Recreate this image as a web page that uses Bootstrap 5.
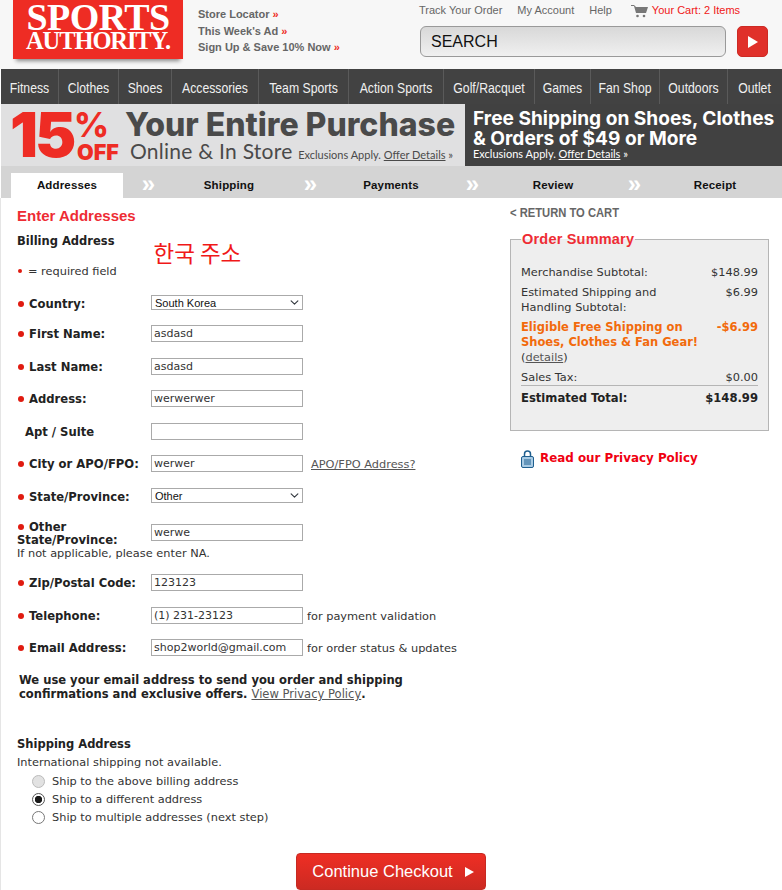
<!DOCTYPE html>
<html lang="en">
<head>
  <meta charset="UTF-8">
  <title>Sports Authority - Checkout</title>
  <link href="https://cdn.jsdelivr.net/npm/bootstrap@5.3.0/dist/css/bootstrap.min.css" rel="stylesheet">
  <style>
    body { font-family: "DejaVu Sans", Verdana, sans-serif; font-size: 11.35px; color: #333; background: #fff; overflow-x: hidden; }
    a { color: #555; }
    .page-top { height: 69px; background: #f7f7f7; }
    .logo-box { width: 170px; height: 59px; margin-left: 13px; background: #ee2c24; color: #fff; font-family: "Liberation Serif", serif; font-weight: 700; text-align: center; box-shadow: 0 5px 4px -3px #888; line-height: 1; flex: 0 0 auto; }
    .logo-one { font-size: 38px; letter-spacing: -.6px; line-height: 28px; padding-top: 3px; }
    .logo-two { font-size: 24.5px; letter-spacing: -1.1px; line-height: 20px; }
    .quick-links { margin-left: 15px; padding-top: 6px; font-family: "Liberation Sans", Arial, sans-serif; font-size: 11px; font-weight: 700; color: #666; line-height: 16.5px; }
    .quick-links span { color: #ee2c24; }
    .top-right { width: 362px; margin-left: auto; }
    .acct-links { font-family: "Liberation Sans", Arial, sans-serif; font-size: 11px; line-height: 13px; color: #666; padding: 4px 0 0 0; height: 26px; gap: 15px; margin-left: -1px; }
    .acct-links .cart-txt { color: #f01818; gap: 4px; margin-left: 4px; }
    .search-field { width: 306px; height: 31px; border: 1px solid #999; border-radius: 6px; background: linear-gradient(#d8d8d8, #f0f0f0); font-family: "Liberation Sans", Arial, sans-serif; font-size: 16px; color: #111; padding: 3px 10px; }
    .search-go { width: 31px; height: 31px; margin-left: 11px; border-radius: 5px; background: #e0302a; border: 1px solid #cc2a24; padding: 0; }
    .main-nav { height: 35px; background: #424242; margin-left: 1px; font-family: "Liberation Sans", sans-serif; font-size: 15px; color: #f0f0f0; }
    .main-nav a { text-decoration: none; color: inherit; line-height: 37px; border-right: 1px solid #5a5a5a; white-space: nowrap; flex: 0 0 auto; }
    .main-nav a span { display: block; transform: scaleX(.815); }
    .main-nav a:last-child { border-right: 0; }
    .main-nav a:nth-child(1) { width: 58px; }
    .main-nav a:nth-child(2) { width: 60px; }
    .main-nav a:nth-child(3) { width: 53px; }
    .main-nav a:nth-child(4) { width: 87px; }
    .main-nav a:nth-child(5) { width: 90px; }
    .main-nav a:nth-child(6) { width: 95px; }
    .main-nav a:nth-child(7) { width: 91px; }
    .main-nav a:nth-child(8) { width: 56px; }
    .main-nav a:nth-child(9) { width: 69px; }
    .main-nav a:nth-child(10) { width: 68px; }
    .main-nav a:nth-child(11) { width: 53px; }
    .promo { height: 62px; margin-left: 1px; font-family: "Inter", sans-serif; }
    .promo a { color: inherit; }
    .promo-left { width: 464px; background: #e0e0e1; color: #4a4a4a; overflow: hidden; flex: 0 0 auto; }
    .promo-num { font-size: 62px; line-height: 62px; font-weight: 900; color: #ee2c24; letter-spacing: -3px; margin-left: 9px; width: 67px; white-space: nowrap; }
    .promo-pct { color: #ee2c24; font-weight: 900; line-height: 1; width: 48px; flex: 0 0 auto; }
    .promo-pct b { display: block; font-size: 34px; line-height: 34px; margin: 4px 0 1px -3px; font-weight: 800; }
    .promo-pct i { display: block; font-style: normal; font-weight: 900; font-size: 21.5px; line-height: 18px; }
    .promo-head { font-size: 32px; font-weight: 800; line-height: 32px; white-space: nowrap; margin-top: 5px; }
    .promo-sub { font-family: "Lato", sans-serif; font-size: 21px; line-height: 20px; white-space: nowrap; letter-spacing: .25px; margin-left: 5px; }
    .promo-sub small { font-size: 11px; letter-spacing: 0; }
    .promo-right { flex: 1; background: #414141; color: #fff; padding: 4px 0 0 8px; white-space: nowrap; min-width: 0; }
    .promo-right strong { display: block; font-size: 19.1px; line-height: 20px; font-weight: 700; }
    .promo-right small { display: block; font-family: "Lato", sans-serif; font-size: 11px; line-height: 13px; margin-top: -1px; }
    .steps { height: 32px; background: #d4d4d4; margin-left: 1px; padding-top: 7px; padding-left: 10px; font-family: "Liberation Sans", Arial, sans-serif; font-weight: 700; font-size: 11.5px; color: #111; letter-spacing: .15px; }
    .step-item { width: 112px; height: 25px; text-align: center; line-height: 24px; }
    .step-item.on { background: #fff; }
    .step-sep { width: 50px; height: 25px; color: #fff; font-size: 24px; line-height: 22px; text-align: center; padding-left: 1px; }
    .content-wrap { border-left: 1px solid #e5e5e5; padding: 0 13px 0 16px; }
    .form-side { width: 493px; flex: 0 0 auto; }
    .sum-side { width: 259px; flex: 0 0 auto; }
    .red-title { font-family: "Liberation Sans", Arial, sans-serif; font-weight: 700; font-size: 15px; color: #ee2c34; line-height: 18px; margin: 9px 0 9px; }
    .sub-title { font-weight: 700; color: #222; font-size: 11.5px; line-height: 14px; margin: 0; white-space: nowrap; }
    .korean { font-family: "Noto Sans CJK KR", sans-serif; color: #f01818; font-size: 22.5px; line-height: 26px; margin: 5px 0 0 39px; }
    .req-dot { display: inline-block; width: 6px; height: 6px; background: #e01b10; margin: 0 5px 1px 1px; }
    .req-note { line-height: 14px; margin-top: -1px; margin-bottom: 17px; color: #333; }
    .req-note .req-dot { width: 4px; height: 4px; margin: 0 6px 2px 1px; }
    .field-row { height: 17px; margin-bottom: 15.5px; }
    .field-row.pick-top { margin-bottom: 13px; }
    .field-lbl { width: 134px; font-size: 11.6px; font-weight: 700; color: #222; line-height: 19px; white-space: nowrap; flex: 0 0 auto; }
    .field-lbl.indent { padding-left: 8px; }
    .form-control.fld, .form-select.fld { width: 152px; height: 17px; min-height: 0; padding: 0 1px 0 2px; border: 1px solid #aaa; border-radius: 0; font-size: 11px; line-height: 15px; color: #333; flex: 0 0 auto; box-shadow: none; }
    .form-select.fld { height: 15px; padding: 0 14px 0 3px; font-family: "Liberation Sans", Arial, sans-serif; color: #111; background-size: 11px 9px; background-position: right 2px center; }
    .form-control.fld.other-fld { margin-top: 4px; }
    .field-note { margin-left: 4px; line-height: 19px; white-space: nowrap; }
    .other-row { height: 26px; }
    .other-lbl { width: 134px; font-size: 11.6px; font-weight: 700; color: #222; line-height: 13px; padding-top: 1px; flex: 0 0 auto; }
    .other-hint { line-height: 14px; margin-bottom: 14px; }
    .email-note { margin: 17px 0 0 2px; font-size: 11.55px; font-weight: 700; color: #222; line-height: 14px; white-space: nowrap; }
    .email-note a { font-weight: 400; }
    .ship-box { margin-top: 36px; }
    .ship-note { margin: 3px 0 1px; line-height: 17px; }
    .ship-opts { margin: 0 0 0 15px; }
    .ship-opt { height: 18px; line-height: 18px; margin: 0; padding: 0; min-height: 0; }
    .ship-opt .form-check-input { width: 13px; height: 13px; margin: 0 7px 0 0; float: none; border: 1px solid #777; background-color: #fff; flex: 0 0 auto; }
    .ship-opt .form-check-input:checked { background-image: radial-gradient(circle, #1a1a1a 3.4px, transparent 4px); background-color: #fff; border-color: #555; }
    .ship-opt .form-check-input:disabled { opacity: 1; background-color: #e2e2e2; border-color: #bbb; }
    .ship-opt .form-check-label { opacity: 1 !important; color: #333; }
    .btn.go-btn { width: 190px; height: 37px; margin: 27px 0 0 279px; padding: 0 0 0 4px; gap: 12px; border: 1px solid #c62a22; border-radius: 4px; background: linear-gradient(#ee2e24, #cc2a22); color: #fff; font-family: "Liberation Sans", Arial, sans-serif; font-size: 16.5px; }
    .back-link { font-family: "Liberation Sans", sans-serif; font-weight: 700; font-size: 13.5px; color: #666; text-decoration: none; line-height: 16px; margin-top: 7px; display: block; transform: scaleX(.83); transform-origin: left center; white-space: nowrap; }
    .sum-box { margin: 10px 0 0; padding: 18px 10px 0; background: #eee; border: 1px solid #b5b5b5; min-width: 0; line-height: 15px; height: 200px; }
    .sum-box legend { float: none; width: auto; margin: 0; padding: 0 1px; font-family: "Liberation Sans", Arial, sans-serif; font-weight: 700; font-size: 14.5px; line-height: 16px; color: #ee2c34; letter-spacing: .2px; }
    .sum-row { margin-bottom: 5px; }
    .sum-row.orange { font-size: 11.5px; color: #f26a0c; font-weight: 700; margin-bottom: 0; }
    .sum-row.total { font-size: 11.6px; border-top: 1px solid #b5b5b5; padding-top: 5px; margin-top: -5px; font-weight: 700; color: #222; }
    .privacy-line { margin: 19px 0 0 11px; font-weight: 700; font-size: 11.9px; color: #f00010; gap: 6px; }
    .privacy-line a { color: inherit; text-decoration: none; }
  </style>
</head>
<body>

<header class="page-top d-flex">
  <div class="logo-box">
    <div class="logo-one">SPORTS</div>
    <div class="logo-two">AUTHORITY.</div>
  </div>
  <div class="quick-links">
    <div>Store Locator <span>»</span></div>
    <div>This Week's Ad <span>»</span></div>
    <div>Sign Up &amp; Save 10% Now <span>»</span></div>
  </div>
  <div class="top-right">
    <div class="acct-links d-flex align-items-start">
      <span>Track Your Order</span>
      <span>My Account</span>
      <span>Help</span>
      <span class="d-flex align-items-start cart-txt">
        <svg width="17" height="14" viewBox="0 0 17 14"><path d="M0 1h3l2 2h12l-2 6H5L3 2H0z" fill="#777"/><circle cx="6.500" cy="12" r="1.300" fill="#777"/><circle cx="13" cy="12" r="1.300" fill="#777"/></svg>
        Your Cart: 2 Items
      </span>
    </div>
    <div class="d-flex">
      <div class="search-field">SEARCH</div>
      <button class="search-go d-flex align-items-center justify-content-center" type="button">
        <svg width="10" height="12" viewBox="0 0 10 12"><path d="M0 0l10 6-10 6z" fill="#fff"/></svg>
      </button>
    </div>
  </div>
</header>

<nav class="main-nav d-flex text-center">
  <a href="#"><span>Fitness</span></a><a href="#"><span>Clothes</span></a><a href="#"><span>Shoes</span></a><a href="#"><span>Accessories</span></a><a href="#"><span>Team Sports</span></a><a href="#"><span>Action Sports</span></a><a href="#"><span>Golf/Racquet</span></a><a href="#"><span>Games</span></a><a href="#"><span>Fan Shop</span></a><a href="#"><span>Outdoors</span></a><a href="#"><span>Outlet</span></a>
</nav>

<section class="promo d-flex">
  <div class="promo-left d-flex">
    <div class="promo-num">15</div>
    <div class="promo-pct"><b>%</b><i>OFF</i></div>
    <div>
      <div class="promo-head">Your Entire Purchase</div>
      <div class="promo-sub">Online &amp; In Store <small>Exclusions Apply. <a href="#">Offer Details</a> »</small></div>
    </div>
  </div>
  <div class="promo-right">
    <strong>Free Shipping on Shoes, Clothes</strong>
    <strong>&amp; Orders of $49 or More</strong>
    <small>Exclusions Apply. <a href="#">Offer Details</a> »</small>
  </div>
</section>

<div class="steps d-flex">
  <div class="step-item on">Addresses</div><div class="step-sep">»</div>
  <div class="step-item">Shipping</div><div class="step-sep">»</div>
  <div class="step-item">Payments</div><div class="step-sep">»</div>
  <div class="step-item">Review</div><div class="step-sep">»</div>
  <div class="step-item">Receipt</div>
</div>

<main class="content-wrap d-flex">
  <form class="form-side">
    <h1 class="red-title">Enter Addresses</h1>
    <div class="d-flex">
      <h2 class="sub-title">Billing Address</h2>
      <div class="korean">한국 주소</div>
    </div>
    <div class="req-note"><span class="req-dot rounded-circle"></span>= required field</div>

    <div class="field-row pick-top d-flex">
      <div class="field-lbl"><span class="req-dot rounded-circle"></span>Country:</div>
      <select class="form-select fld"><option>South Korea</option></select>
    </div>
    <div class="field-row d-flex">
      <div class="field-lbl"><span class="req-dot rounded-circle"></span>First Name:</div>
      <input class="form-control fld" type="text" value="asdasd">
    </div>
    <div class="field-row d-flex">
      <div class="field-lbl"><span class="req-dot rounded-circle"></span>Last Name:</div>
      <input class="form-control fld" type="text" value="asdasd">
    </div>
    <div class="field-row d-flex">
      <div class="field-lbl"><span class="req-dot rounded-circle"></span>Address:</div>
      <input class="form-control fld" type="text" value="werwerwer">
    </div>
    <div class="field-row d-flex">
      <div class="field-lbl indent">Apt / Suite</div>
      <input class="form-control fld" type="text">
    </div>
    <div class="field-row d-flex">
      <div class="field-lbl"><span class="req-dot rounded-circle"></span>City or APO/FPO:</div>
      <input class="form-control fld" type="text" value="werwer">
      <a class="field-note ms-2" href="#">APO/FPO Address?</a>
    </div>
    <div class="field-row d-flex">
      <div class="field-lbl"><span class="req-dot rounded-circle"></span>State/Province:</div>
      <select class="form-select fld"><option>Other</option></select>
    </div>
    <div class="other-row d-flex">
      <div class="other-lbl"><span class="req-dot rounded-circle"></span>Other State/Province:</div>
      <input class="form-control fld other-fld" type="text" value="werwe">
    </div>
    <div class="other-hint">If not applicable, please enter NA.</div>
    <div class="field-row d-flex">
      <div class="field-lbl"><span class="req-dot rounded-circle"></span>Zip/Postal Code:</div>
      <input class="form-control fld" type="text" value="123123">
    </div>
    <div class="field-row d-flex">
      <div class="field-lbl"><span class="req-dot rounded-circle"></span>Telephone:</div>
      <input class="form-control fld" type="text" value="(1) 231-23123">
      <span class="field-note">for payment validation</span>
    </div>
    <div class="field-row d-flex">
      <div class="field-lbl"><span class="req-dot rounded-circle"></span>Email Address:</div>
      <input class="form-control fld" type="text" value="shop2world@gmail.com">
      <span class="field-note">for order status &amp; updates</span>
    </div>
    <p class="email-note">We use your email address to send you order and shipping<br>confirmations and exclusive offers. <a href="#">View Privacy Policy</a>.</p>

    <div class="ship-box">
      <h2 class="sub-title">Shipping Address</h2>
      <div class="ship-note">International shipping not available.</div>
      <div class="ship-opts">
        <div class="form-check ship-opt d-flex align-items-center">
          <input class="form-check-input" type="radio" name="shipTo" id="shipA" disabled>
          <label class="form-check-label" for="shipA">Ship to the above billing address</label>
        </div>
        <div class="form-check ship-opt d-flex align-items-center">
          <input class="form-check-input" type="radio" name="shipTo" id="shipB" checked>
          <label class="form-check-label" for="shipB">Ship to a different address</label>
        </div>
        <div class="form-check ship-opt d-flex align-items-center">
          <input class="form-check-input" type="radio" name="shipTo" id="shipC">
          <label class="form-check-label" for="shipC">Ship to multiple addresses (next step)</label>
        </div>
      </div>
    </div>

    <button type="button" class="btn go-btn d-flex align-items-center justify-content-center">
      Continue Checkout
      <svg width="9" height="10" viewBox="0 0 9 10"><path d="M0 0l9 5-9 5z" fill="#fff"/></svg>
    </button>
  </form>

  <aside class="sum-side">
    <a class="back-link" href="#">&lt; RETURN TO CART</a>
    <fieldset class="sum-box">
      <legend>Order Summary</legend>
      <div class="sum-row d-flex justify-content-between"><span>Merchandise Subtotal:</span><span>$148.99</span></div>
      <div class="sum-row d-flex justify-content-between"><span>Estimated Shipping and<br>Handling Subtotal:</span><span>$6.99</span></div>
      <div class="sum-row orange d-flex justify-content-between"><span>Eligible Free Shipping on<br>Shoes, Clothes &amp; Fan Gear!</span><span>-$6.99</span></div>
      <div class="sum-row">(<a href="#">details</a>)</div>
      <div class="sum-row d-flex justify-content-between"><span>Sales Tax:</span><span>$0.00</span></div>
      <div class="sum-row total d-flex justify-content-between"><span>Estimated Total:</span><span>$148.99</span></div>
    </fieldset>
    <div class="privacy-line d-flex align-items-center">
      <svg width="13" height="18" viewBox="0 0 13 18"><path d="M3.500 7V4a3 3 0 0 1 6 0v3" fill="none" stroke="#1f5f8f" stroke-width="1.500"/><rect x=".5" y="6.500" width="12" height="11" rx="1.500" fill="#a9cbe4" stroke="#1f5f8f"/><path d="M3 10h7M3 12h7M3 14h7" stroke="#1f5f8f"/></svg>
      <a href="#">Read our Privacy Policy</a>
    </div>
  </aside>
</main>

<script src="https://cdn.jsdelivr.net/npm/bootstrap@5.3.0/dist/js/bootstrap.bundle.min.js"></script>
</body>
</html>
